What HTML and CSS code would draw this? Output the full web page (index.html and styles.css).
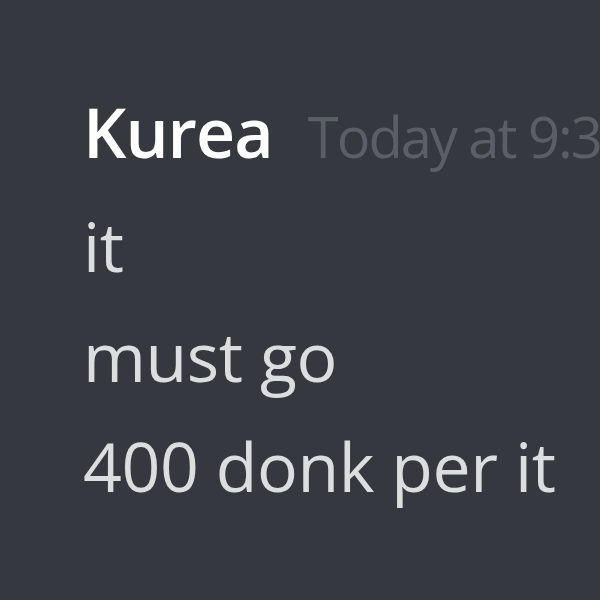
FILE: index.html
```html
<!DOCTYPE html>
<html lang="en">
  <head>
    <meta charset="UTF-8" />
    <title>Chat</title>
    <link rel="stylesheet" href="styles.css">
  </head>
  <body>
    <div class="message">
      <div class="header">
        <span class="username">Kurea</span>
        <span class="timestamp">Today at 9:30 PM</span>
      </div>
      <div class="line">it</div>
      <div class="line">must go</div>
      <div class="line">400 donk per it</div>
    </div>
  </body>
</html>
```

FILE: styles.css
```css
html,
body {
  margin: 0;
  height: 100%;
  background-color: #36383f;
  overflow: hidden;
}
.message {
  padding: 77px 0 0 83px;
  font-family: "Open Sans", "Noto Sans", sans-serif;
  font-size: 68px;
  line-height: 110px;
  color: #dcddde;
  white-space: nowrap;
  letter-spacing: -0.4px;
}
.username {
  color: #ffffff;
  font-weight: 600;
  letter-spacing: -1px;
}
.timestamp {
  margin-left: 18px;
  font-size: 56px;
  color: #5a5e66;
  letter-spacing: -2px;
}
```
